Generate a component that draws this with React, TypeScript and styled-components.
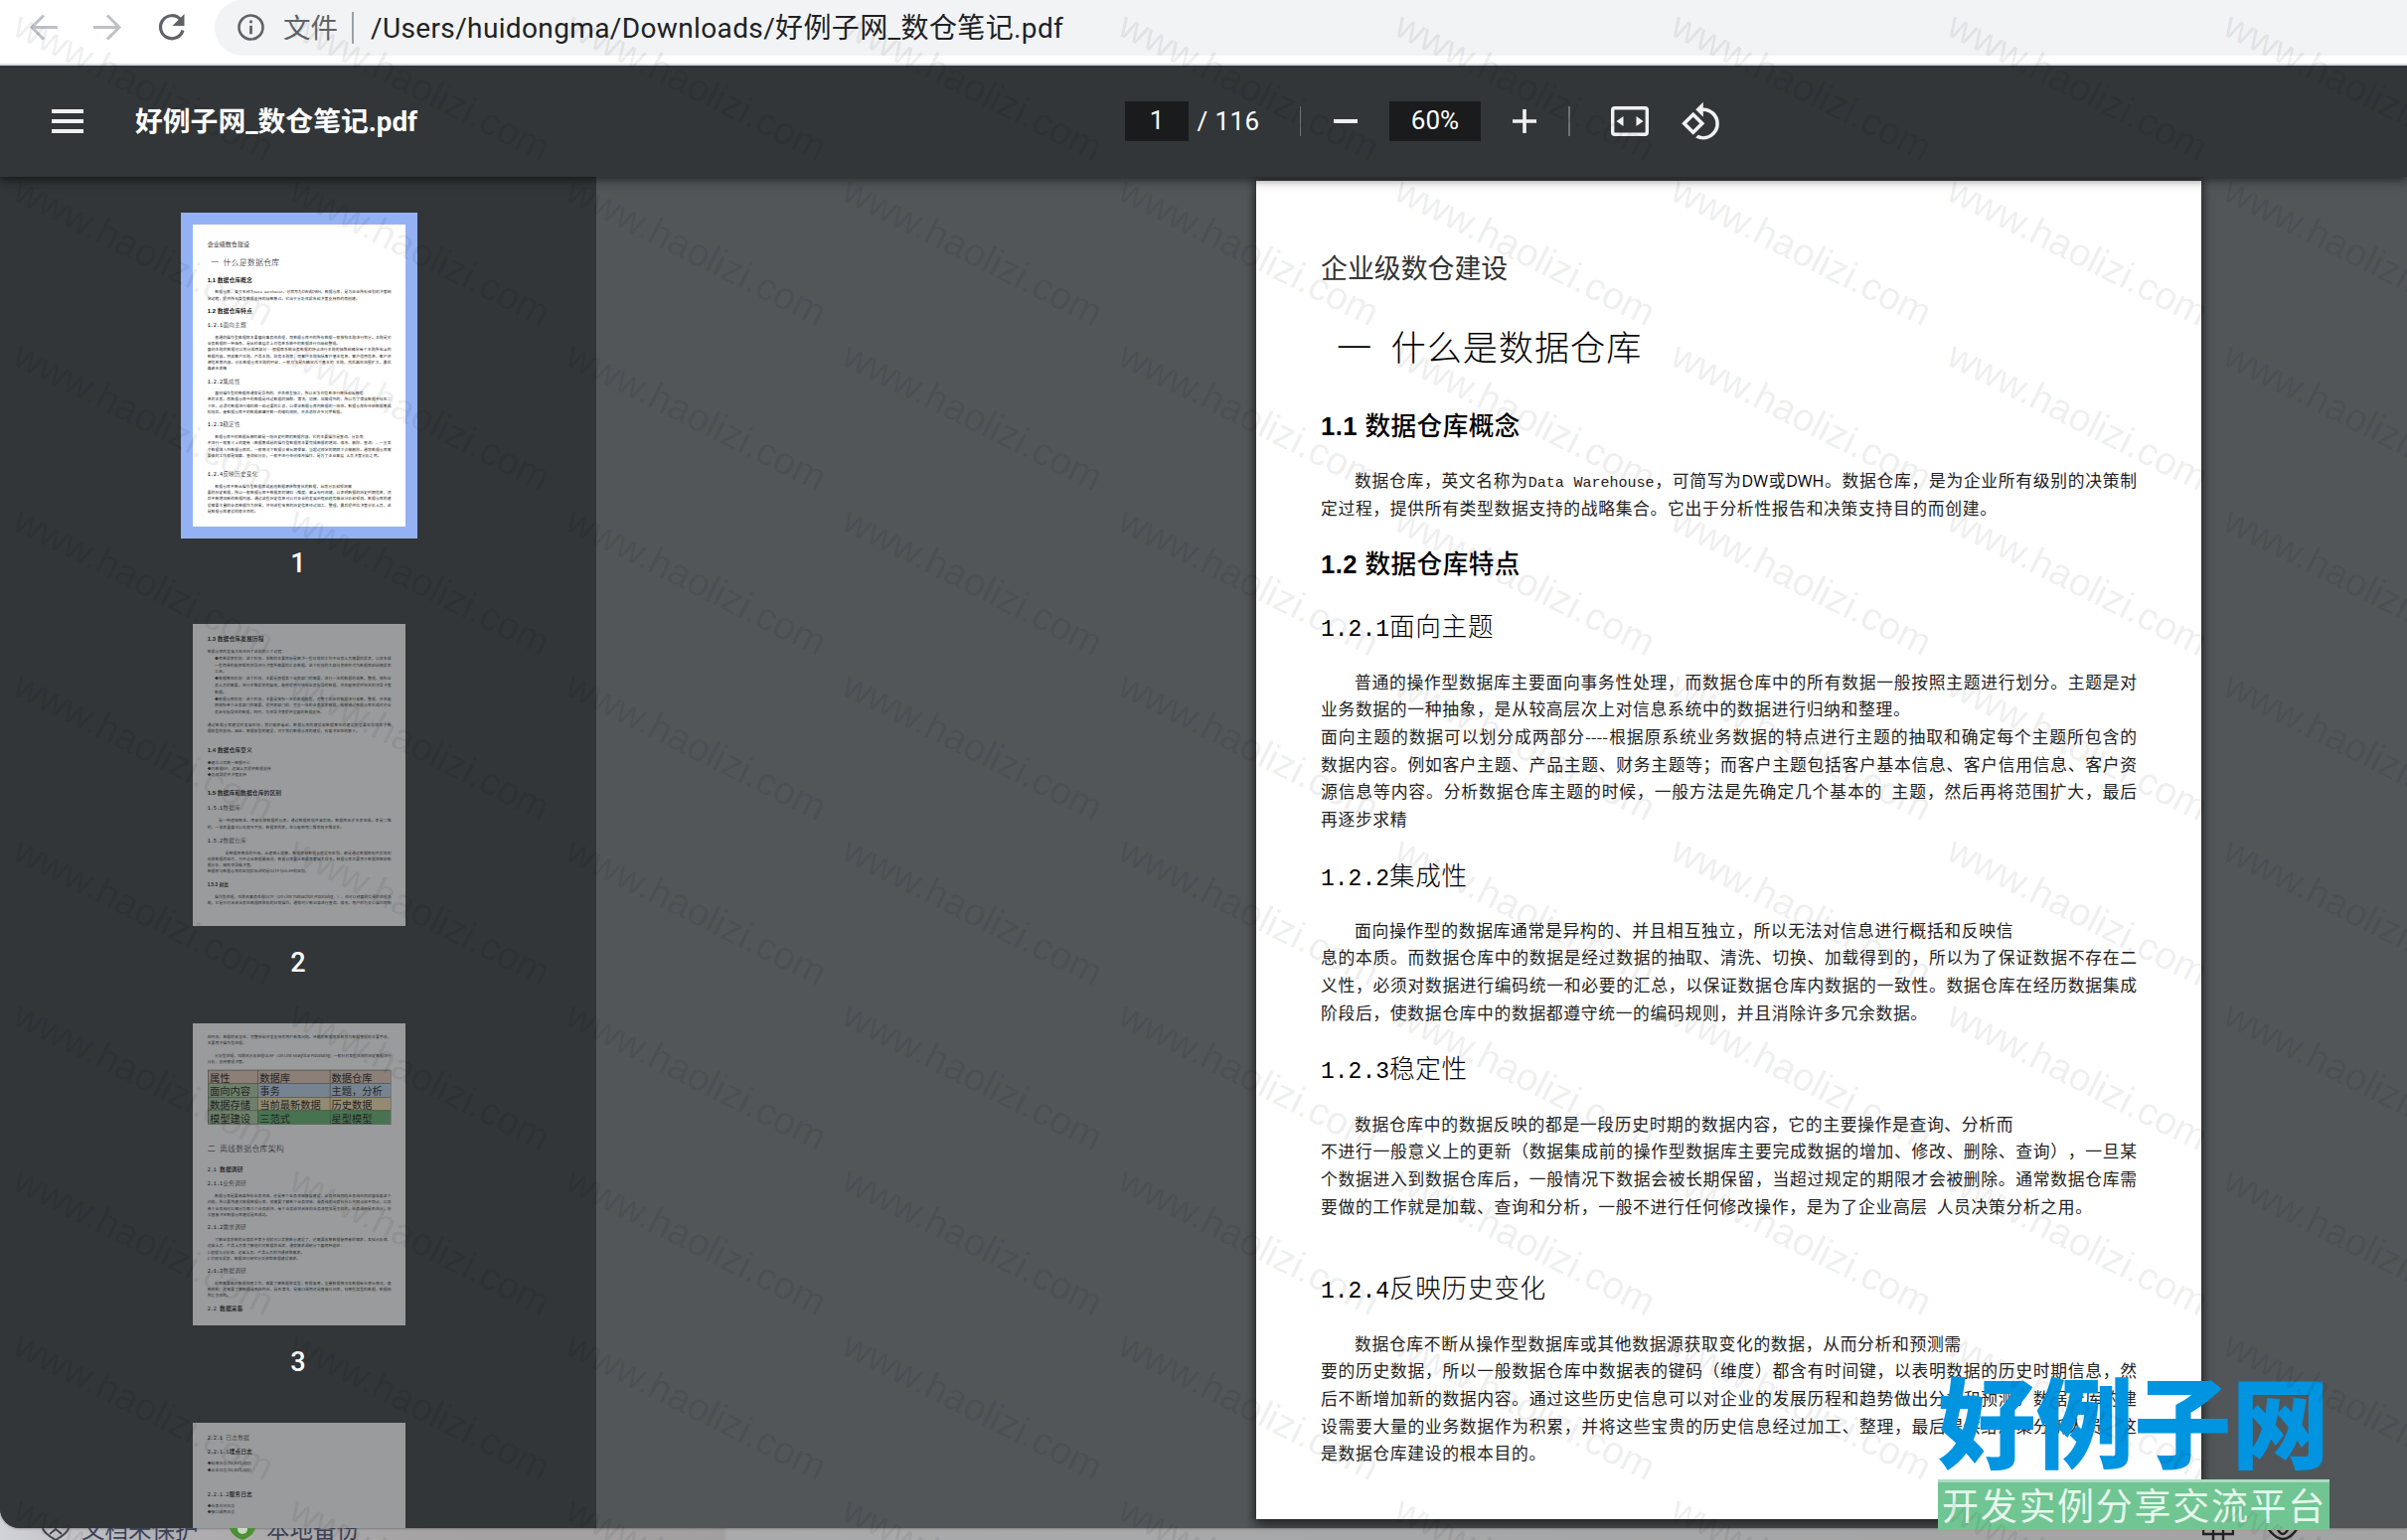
import React from 'react';
import styled, { createGlobalStyle } from 'styled-components';

const Global = createGlobalStyle`
  * { box-sizing: border-box; }
  html, body { margin: 0; padding: 0; background: #a5a5a6; overflow: hidden; }
  body { font-family: Roboto, "Noto Sans CJK SC", sans-serif; text-spacing-trim: space-all; }
`;

const Screen = styled.div`
  position: relative;
  width: 2422px;
  height: 1550px;
  overflow: hidden;
  display: flex;
  flex-direction: column;
  background: linear-gradient(90deg, #d2d3d8 0, #b0aeb0 160px, #a6a3a4 420px, #a19fa0 728px, #a9aaab 732px, #a3a3a4 100%);
`;

const BrowserWindow = styled.div`
  height: 1538px;
  flex: none;
  display: flex;
  flex-direction: column;
  overflow: hidden;
  border-radius: 0 0 0 20px;
  background: #323639;
  box-shadow: 0 0 3px rgba(0, 0, 0, 0.5);
`;

const AddressBar = styled.div`
  position: relative;
  z-index: 3;
  height: 66px;
  flex: none;
  display: flex;
  align-items: flex-start;
  background: #fff;
  border-bottom: 2px solid #dadce0;
`;

const NavButtons = styled.div`
  width: 216px;
  height: 56px;
  padding-left: 24px;
  display: flex;
  align-items: center;
  gap: 30px;
`;

const Omnibox = styled.div`
  flex: 1;
  height: 56px;
  padding: 0 0 1px 22px;
  display: flex;
  align-items: center;
  border-radius: 28px 0 0 28px;
  background: #f1f3f4;
  font-size: 28px;
  white-space: pre;
`;

const Scheme = styled.span`
  margin-left: 18px;
  padding-bottom: 3px;
  color: #5f6368;
  font-size: 27.5px;
`;

const OmniDivider = styled.span`
  width: 2px;
  height: 32px;
  margin: 0 17px 0 14px;
  background: #9aa0a6;
`;

const Path = styled.span`
  padding-bottom: 4px;
  color: #202124;
  letter-spacing: 0.37px;
`;

const PdfToolbar = styled.div`
  position: relative;
  z-index: 2;
  height: 112px;
  flex: none;
  display: flex;
  align-items: center;
  background: #323639;
  color: #fff;
  box-shadow: 0 -2px 16px rgba(0, 0, 0, 0.1), 0 2px 8px rgba(0, 0, 0, 0.4), 0 4px 12px rgba(0, 0, 0, 0.2);
`;

const ToolbarStart = styled.div`
  width: 1132px;
  padding-left: 44px;
  display: flex;
  align-items: center;
  gap: 44px;
`;

const FileName = styled.span`
  padding-bottom: 4px;
  font-size: 27.8px;
  font-weight: 700;
  white-space: pre;
`;

const ValueBox = styled.span<{ $w: number }>`
  width: ${p => p.$w}px;
  height: 40px;
  line-height: 39px;
  text-align: center;
  background: #1a1b1c;
  font-size: 26px;
`;

const PageTotal = styled.span`
  margin-left: 8.5px;
  width: 103px;
  font-size: 26px;
  line-height: 39px;
  letter-spacing: 0.4px;
  white-space: pre;
`;

const ToolDivider = styled.span`
  width: 1.5px;
  height: 30px;
  background: #6f7274;
`;

const IconSlot = styled.span<{ $w: number }>`
  width: ${p => p.$w}px;
  display: flex;
  justify-content: center;
  align-items: center;
`;

const Viewer = styled.div`
  flex: 1;
  min-height: 0;
  display: flex;
`;

const Sidebar = styled.div`
  width: 600px;
  flex: none;
  padding: 36px 0 0 2px;
  display: flex;
  flex-direction: column;
  align-items: center;
  overflow: hidden;
  background: #323639;
`;

const ThumbItem = styled.div`
  width: 598px;
  height: 402px;
  flex: none;
  display: flex;
  flex-direction: column;
  align-items: center;
  color: #fff;
`;

const ThumbFrame = styled.div<{ $active?: boolean }>`
  width: 238px;
  height: 328px;
  padding: 12px;
  background: ${p => (p.$active ? '#94b1f3' : 'transparent')};
`;

const ThumbClip = styled.div<{ $active?: boolean }>`
  width: 214px;
  height: 304px;
  overflow: hidden;
  background: #fff;
  opacity: ${p => (p.$active ? 1 : 0.5)};
`;

const ThumbScale = styled.div`
  width: 951px;
  height: 1347px;
  transform: scale(0.2252);
  transform-origin: 0 0;
`;

const ThumbNumber = styled.span`
  margin: 9px 2px 0 0;
  font-size: 27px;
  font-weight: 500;
  line-height: 32px;
`;

const Canvas = styled.div`
  flex: 1;
  padding: 4px 0 0 664px;
  background: #525659;
  overflow: hidden;
`;

const Sheet = styled.div`
  width: 951px;
  height: 1347px;
  padding-left: 65px;
  background: #fff;
  overflow: hidden;
`;

const MainSheet = styled.div`
  width: 951px;
  box-shadow: 0 0 7px 2px rgba(0, 0, 0, 0.4), 0 10px 12px rgba(0, 0, 0, 0.35);
`;

type Kind = 'title' | 'h1' | 'h2' | 'h2m' | 'h3' | 'h4' | 'p' | 'full';

const HEIGHT: Record<Kind, number> = { title: 40, h1: 50, h2: 36, h2m: 36, h3: 36, h4: 30, p: 26, full: 26 };

const TextLine = styled.div<{ $gap: number; $indent: number }>`
  margin-top: ${p => p.$gap}px;
  margin-left: ${p => p.$indent}px;
  white-space: pre;
`;

const DocTitle = styled(TextLine)`
  height: 40px;
  font: 400 26.9px/38px "Noto Sans CJK SC", sans-serif;
  color: #333;
`;

const Chapter = styled(TextLine)`
  height: 50px;
  font: 300 35.2px/57px "Liberation Mono", "Noto Sans CJK SC", sans-serif;
  letter-spacing: 0.9px;
  word-spacing: -3.5px;
  color: #000;
`;

const Section = styled(TextLine)`
  height: 36px;
  font: 500 25.6px/33px "Noto Sans CJK SC", sans-serif;
  letter-spacing: 0.45px;
  color: #000;
`;

const SubSection = styled(TextLine)`
  height: 36px;
  font: 300 25.6px/31px "Noto Sans CJK SC", sans-serif;
  letter-spacing: 0.7px;
  color: #000;
`;

const MinorSection = styled(TextLine)`
  height: 30px;
  font: 700 20px/30px "Liberation Sans", "Noto Sans CJK SC", sans-serif;
  letter-spacing: 0.5px;
  color: #000;
`;

const Numerals = styled.span`
  font-family: "Liberation Mono", monospace;
  font-size: 23px;
  letter-spacing: 0;
`;

const BoldNumerals = styled.span`
  font-family: "Liberation Sans", Arial, sans-serif;
  font-weight: 700;
`;

const Body = styled(TextLine)<{ $full?: boolean }>`
  width: ${p => (p.$full ? 821 - p.$indent + 'px' : 'auto')};
  height: 26px;
  font: 400 16.8px/24px "Noto Sans CJK SC", sans-serif;
  letter-spacing: ${p => (p.$full ? '0' : '0.67px')};
  white-space: ${p => (p.$full ? 'nowrap' : 'pre')};
  text-align-last: ${p => (p.$full ? 'justify' : 'left')};
  color: #222;
`;

const Serif = styled.span`
  font-family: "Liberation Mono", monospace;
  font-size: 15px;
  letter-spacing: 0;
`;

const Gothic = styled.span`
  font-family: "Open Sans", sans-serif;
  font-weight: 500;
  font-size: 16px;
  color: #000;
`;

type Row = [Kind, number, React.ReactNode, number?];

function splitNumber(text: React.ReactNode, Num: React.ElementType) {
  const m = typeof text === 'string' ? text.match(/^([\d.]+ ?)(.*)$/) : null;
  return m ? (<><Num>{m[1]}</Num>{m[2]}</>) : text;
}

/* Rows carry the vertical centre of each line; gaps between lines follow from it. */
function Rows({ rows, from = 0 }: { rows: Row[]; from?: number }) {
  let bottom = from;
  return (
    <>
      {rows.map(([kind, center, text, indent = 0], i) => {
        const top = center - HEIGHT[kind] / 2;
        const props = { $gap: Math.round((top - bottom) * 10) / 10, $indent: indent };
        bottom = top + HEIGHT[kind];
        switch (kind) {
          case 'title': return <DocTitle key={i} {...props}>{text}</DocTitle>;
          case 'h1': return <Chapter key={i} {...props}>{text}</Chapter>;
          case 'h2': return <Section key={i} {...props}>{splitNumber(text, BoldNumerals)}</Section>;
          case 'h2m': return <Section key={i} {...props}>{splitNumber(text, Numerals)}</Section>;
          case 'h3': return <SubSection key={i} {...props}>{splitNumber(text, Numerals)}</SubSection>;
          case 'h4': return <MinorSection key={i} {...props}>{text}</MinorSection>;
          default: return <Body key={i} {...props} $full={kind === 'full'}>{text}</Body>;
        }
      })}
    </>
  );
}

const page1: Row[] = [
  ['title', 88, '企业级数仓建设'],
  ['h1', 168.7, '一 什么是数据仓库', 16],
  ['h2', 246, '1.1 数据仓库概念'],
  ['full', 302.3, <>数据仓库，英文名称为<Serif>Data&nbsp;Warehouse</Serif>，可简写为<Gothic>DW</Gothic>或<Gothic>DWH</Gothic>。数据仓库，是为企业所有级别的决策制</>, 34],
  ['p', 329.6, '定过程，提供所有类型数据支持的战略集合。它出于分析性报告和决策支持目的而创建。'],
  ['h2', 384.7, '1.2 数据仓库特点'],
  ['h3', 449, '1.2.1面向主题'],
  ['full', 505.3, '普通的操作型数据库主要面向事务性处理，而数据仓库中的所有数据一般按照主题进行划分。主题是对', 34],
  ['p', 532.3, '业务数据的一种抽象，是从较高层次上对信息系统中的数据进行归纳和整理。'],
  ['full', 560, '面向主题的数据可以划分成两部分----根据原系统业务数据的特点进行主题的抽取和确定每个主题所包含的'],
  ['full', 588, '数据内容。例如客户主题、产品主题、财务主题等；而客户主题包括客户基本信息、客户信用信息、客户资'],
  ['full', 615.5, '源信息等内容。分析数据仓库主题的时候，一般方法是先确定几个基本的\u00a0\u00a0主题，然后再将范围扩大，最后'],
  ['p', 643.4, '再逐步求精'],
  ['h3', 699.7, '1.2.2集成性'],
  ['p', 754.7, '面向操作型的数据库通常是异构的、并且相互独立，所以无法对信息进行概括和反映信', 34],
  ['full', 782, '息的本质。而数据仓库中的数据是经过数据的抽取、清洗、切换、加载得到的，所以为了保证数据不存在二'],
  ['full', 810, '义性，必须对数据进行编码统一和必要的汇总，以保证数据仓库内数据的一致性。数据仓库在经历数据集成'],
  ['p', 838, '阶段后，使数据仓库中的数据都遵守统一的编码规则，并且消除许多冗余数据。'],
  ['h3', 894, '1.2.3稳定性'],
  ['p', 950, '数据仓库中的数据反映的都是一段历史时期的数据内容，它的主要操作是查询、分析而', 34],
  ['full', 977.5, '不进行一般意义上的更新（数据集成前的操作型数据库主要完成数据的增加、修改、删除、查询），一旦某'],
  ['full', 1005.3, '个数据进入到数据仓库后，一般情况下数据会被长期保留，当超过规定的期限才会被删除。通常数据仓库需'],
  ['p', 1033, '要做的工作就是加载、查询和分析，一般不进行任何修改操作，是为了企业高层\u00a0\u00a0人员决策分析之用。'],
  ['h3', 1114.7, '1.2.4反映历史变化'],
  ['p', 1171.3, '数据仓库不断从操作型数据库或其他数据源获取变化的数据，从而分析和预测需', 34],
  ['full', 1198.5, '要的历史数据，所以一般数据仓库中数据表的键码（维度）都含有时间键，以表明数据的历史时期信息，然'],
  ['full', 1226.3, '后不断增加新的数据内容。通过这些历史信息可以对企业的发展历程和趋势做出分析和预测。数据仓库的建'],
  ['full', 1254, '设需要大量的业务数据作为积累，并将这些宝贵的历史信息经过加工、整理，最后提供给决策分析人员，这'],
  ['p', 1281.3, '是数据仓库建设的根本目的。'],
];

const page2: Row[] = [
  ['h2', 66.6, '1.3 数据仓库发展历程'],
  ['p', 123, '数据仓库的发展大致经历了这样的三个过程：'],
  ['full', 154, '◆简单报表阶段：这个阶段，系统的主要目标是解决一些日常的工作中业务人员需要的报表，以及生成', 33],
  ['full', 183.5, '一些简单的能够帮助领导进行决策所需要的汇总数据。这个阶段的大部分表现形式为数据库和前端报表', 33],
  ['p', 211.6, '工具。', 33],
  ['full', 242.7, '◆数据集市阶段：这个阶段，主要是根据某个业务部门的需要，进行一定的数据的采集，整理，按照业', 33],
  ['full', 273.8, '务人员的需要，进行多维报表的展现，能够提供对特定业务指导的数据，并且能够提供特定的领导决策', 33],
  ['p', 305, '数据。', 33],
  ['full', 336, '◆数据仓库阶段：这个阶段，主要是按照一定的数据模型，对整个企业的数据进行采集，整理，并且能', 33],
  ['full', 362.6, '够按照各个业务部门的需要，提供跨部门的，完全一致的业务报表数据，能够通过数据仓库生成对对业', 33],
  ['p', 393.7, '务具有指导性的数据，同时，为领导决策提供全面的数据支持。', 33],
  ['full', 451.4, '通过数据仓库建设的发展阶段，我们能够看出，数据仓库的建设和数据集市的建设的重要区别就在于数'],
  ['p', 478, '据模型的支持。因此，数据模型的建设，对于我们数据仓库的建设，有着决定性的意义。'],
  ['h2', 565, '1.4 数据仓库意义'],
  ['p', 620, '◆建立公司统一数据中心'],
  ['p', 647, '◆为数据BP、运营人员提供数据支持'],
  ['p', 673, '◆为领导提供决策支持'],
  ['h2', 755, '1.5 数据库和数据仓库的区别'],
  ['h3', 821, '1.5.1数据库'],
  ['full', 877.6, '是一种逻辑概念，用来存放数据的仓库。通过数据库软件来实现。数据库由许多表组成，表是二维', 50],
  ['p', 908.7, '的，一张表里面可以有很多字段，数据库的表，在与能够用二维表现多维关系。'],
  ['h3', 968, '1.5.2数据仓库'],
  ['full', 1024, '是数据库概念的升级。从逻辑上理解，数据库和数据仓库没有区别，都是通过数据库软件实现的', 80],
  ['full', 1051, '存放数据的地方，只不过从数据量来说，数据仓库要比数据库更庞大得多。数据仓库主要用于数据挖掘和数'],
  ['p', 1077, '据分析，辅助领导做决策。'],
  ['p', 1104, '数据库与数据仓库的区别实际讲的是OLTP与OLAP的区别。'],
  ['h4', 1165, '1.5.3 对比'],
  ['full', 1219.5, '操作型处理，叫联机事务处理OLTP（On-Line Transaction Processing，），也可以称面向交易的处理系', 33],
  ['full', 1246, '统，它是针对具体业务在数据库联机的日常操作，通常对少数记录进行查询、修改。用户较为关心操作的响'],
];

const page3Top: Row[] = [
  ['full', 60.7, '应时间、数据的安全性、完整性和并发支持的用户数等问题。传统的数据库系统作为数据管理的主要手段，'],
  ['p', 87.3, '主要用于操作型处理。'],
  ['full', 146.5, '分析型处理，叫联机分析处理OLAP（On-Line Analytical Processing）一般针对某些主题的历史数据进行', 33],
  ['p', 173, '分析，支持管理决策。'],
];

const page3Bottom: Row[] = [
  ['h1', 561, '二 离线数据仓库架构'],
  ['h2m', 653, '2.1 数据调研'],
  ['h3', 715, '2.1.1业务调研'],
  ['full', 770, '数据仓库是要涵盖所有业务领域，还是各个业务领域独自建设，业务领域内的业务线也同样面临着这个', 33],
  ['full', 798, '问题，所以要构建大数据数据仓库，就需要了解各个业务领域、业务线的业务有什么共同点和不同点，以及'],
  ['full', 827, '各个业务线可以细分为哪几个业务模块，每个业务模块具体的业务流程又是怎样的。业务调研是否充分，将'],
  ['p', 855, '会直接决定数据仓库建设是否成功。'],
  ['h3', 910, '2.1.2需求调研'],
  ['full', 966, '了解业务系统的业务后不等于说就可以实施数仓建设了，还需要收集数据使用者的需求，及找分析师、', 33],
  ['p', 993, '运营人员、产品人员等了解他们对数据的诉求，通常需求调研分下面两种途径：'],
  ['p', 1023, '1.根据与分析师、运营人员、产品人员的沟通获取需求。'],
  ['p', 1051, '2.对现有报表、数据进行研究分析获取数据建设需求。'],
  ['h3', 1106, '2.1.3数据调研'],
  ['full', 1162, '前期需要做好数据探查工作，需要了解数据库类型，数据来源，全量数据情况及数据每年增长情况，更', 33],
  ['full', 1188, '新机制；还需要了解数据是否结构化，是否清洗，是接口调用还是直接访问库，有哪些类型的数据，数据结'],
  ['p', 1215, '构之怎样的。'],
  ['h2m', 1274, '2.2 数据采集'],
];

const page4: Row[] = [
  ['h3', 66.6, '2.2.1 日志数据'],
  ['h2m', 129, '2.2.1.1埋点日志'],
  ['p', 180.6, '◆前端日志(h5,web,app)'],
  ['p', 211.6, '◆点击日志(h5,web,app)'],
  ['h2m', 316.7, '2.2.1.2服务日志'],
  ['p', 371.5, '◆业务访问日志'],
  ['p', 398, '◆接口调用日志'],
];

const Table = styled.div`
  width: 817px;
  margin: 22px 0 0 3px;
  display: grid;
  grid-template-columns: 223px 321px 271px;
  grid-auto-rows: 60.5px;
  border: 2px solid #222;
  border-width: 0 2px 2px 0;
`;

const Cell = styled.div<{ $bg: string }>`
  padding-left: 6px;
  border-left: 2px solid #222;
  border-top: 2px solid #222;
  background: ${p => p.$bg};
  font: 400 45.5px/62px "Noto Sans CJK SC", sans-serif;
  color: #111;
  white-space: pre;
`;

const cells: [string, string][] = [
  ['属性', '#e4c8b6'], ['数据库', '#e4c8b6'], ['数据仓库', '#e4c8b6'],
  ['面向内容', '#acc99b'], ['事务', '#bccfe6'], ['主题，分析', '#bccfe6'],
  ['数据存储', '#acc99b'], ['当前最新数据', '#f3e0a8'], ['历史数据', '#f3e0a8'],
  ['模型建设', '#acc99b'], ['三范式', '#5fb168'], ['星型模型', '#5fb168'],
];

const FirstPage = () => <Sheet><Rows rows={page1} /></Sheet>;
const SecondPage = () => <Sheet><Rows rows={page2} /></Sheet>;
const ThirdPage = () => (
  <Sheet>
    <Rows rows={page3Top} />
    <Table>{cells.map(([t, c]) => <Cell key={t} $bg={c}>{t}</Cell>)}</Table>
    <Rows rows={page3Bottom} from={452} />
  </Sheet>
);
const FourthPage = () => <Sheet><Rows rows={page4} /></Sheet>;

function Thumb({ n, active, children }: { n: number; active?: boolean; children: React.ReactNode }) {
  return (
    <ThumbItem>
      <ThumbFrame $active={active}>
        <ThumbClip $active={active}><ThumbScale>{children}</ThumbScale></ThumbClip>
      </ThumbFrame>
      {n < 4 && <ThumbNumber>{n}</ThumbNumber>}
    </ThumbItem>
  );
}

const BottomStrip = styled.div`
  height: 12px;
  flex: none;
  display: flex;
  align-items: flex-start;
  overflow: hidden;
  padding-left: 42px;
  color: #3a4258;
  font: 400 23.5px/30px "Noto Sans CJK SC", sans-serif;
`;

const StripLabel = styled.span<{ $ml: number; $w: number }>`
  width: ${p => p.$w}px;
  margin: -15px 0 0 ${p => p.$ml}px;
  white-space: pre;
`;

const StripIcon = styled.svg<{ $ml: number }>`
  flex: none;
  margin-left: ${p => p.$ml}px;
`;

const Watermarks = styled.div`
  position: absolute;
  inset: 0;
  z-index: 10;
  display: grid;
  grid-template-columns: repeat(9, 278px);
  grid-auto-rows: 166px;
  padding: 17px 0 0 14px;
  overflow: hidden;
  pointer-events: none;
`;

const Mark = styled.span`
  transform: translate(12.5px, -14px) rotate(26.7deg);
  transform-origin: 0 0;
  font: 400 38.8px/44px "Liberation Sans", Arial, sans-serif;
  color: rgba(0, 0, 0, 0.08);
  white-space: pre;
`;

const SiteBadge = styled.div`
  position: absolute;
  z-index: 5;
  left: 1950px;
  top: 1374px;
  width: 394px;
`;

const SiteName = styled.div`
  height: 115px;
  font: 900 98.5px/107px "Noto Sans CJK SC", sans-serif;
  color: #0094e1;
  white-space: pre;
`;

const SiteSlogan = styled.div`
  height: 51px;
  padding-left: 4px;
  background: #70c592;
  border-top: 3px solid #a9dcbf;
  font: 400 37px/44px "Noto Sans CJK SC", sans-serif;
  letter-spacing: 1.7px;
  color: #e6f6ec;
  white-space: pre;
`;

export default function App() {
  return (
    <Screen>
      <Global />
      <BrowserWindow>
        <AddressBar>
          <NavButtons>
            <svg width="36" height="36" viewBox="0 0 36 36" fill="none" stroke="#bdc1c6" strokeWidth="3"><path d="M34 17.500H9M20 5.500 8 17.500l12 12" /></svg>
            <svg width="36" height="36" viewBox="0 0 36 36" fill="none" stroke="#bdc1c6" strokeWidth="3"><path d="M4 17.500h25M18 5.500l12 12-12 12" /></svg>
            <svg width="36" height="36" viewBox="0 0 36 36"><path d="M25.500 9.500A11.500 11.500 0 1 0 28 20.500" fill="none" stroke="#5f6368" strokeWidth="3.2" /><path d="M29.500 4v12H17.500z" fill="#5f6368" /></svg>
          </NavButtons>
          <Omnibox>
            <svg width="29" height="29" viewBox="0 0 29 29"><circle cx="14.5" cy="14.5" r="12" fill="none" stroke="#5f6368" strokeWidth="2.6" /><path d="M13.1 7.5h2.8v2.8h-2.8zM13.1 12.7h2.8v8.6h-2.8z" fill="#5f6368" /></svg>
            <Scheme>文件</Scheme>
            <OmniDivider />
            <Path>/Users/huidongma/Downloads/好例子网_数仓笔记.pdf</Path>
          </Omnibox>
        </AddressBar>
        <PdfToolbar>
          <ToolbarStart>
            <svg width="48" height="48" viewBox="0 0 48 48" fill="#f1f1f1"><path d="M8 12h32v4H8zM8 22h32v4H8zM8 32h32v4H8z" /></svg>
            <FileName>好例子网_数仓笔记.pdf</FileName>
          </ToolbarStart>
          <ValueBox $w={64}>1</ValueBox>
          <PageTotal>/ 116</PageTotal>
          <ToolDivider />
          <IconSlot $w={89}><svg width="24" height="24"><path d="M0 10h24v4H0z" fill="#f1f1f1" /></svg></IconSlot>
          <ValueBox $w={92}>60%</ValueBox>
          <IconSlot $w={88}><svg width="24" height="24"><path d="M0 10.2h10.2V0h3.6v10.2H24v3.6H13.8V24h-3.6V13.8H0z" fill="#f1f1f1" /></svg></IconSlot>
          <ToolDivider />
          <IconSlot $w={120}>
            <svg width="38" height="30" viewBox="0 0 38 30"><rect x="1.7" y="1.7" width="34.6" height="26.6" rx="2" fill="none" stroke="#f1f1f1" strokeWidth="3.4" /><path d="M12.5 10v10L5.5 15zM25.500 10v10l7-5z" fill="#f1f1f1" /></svg>
          </IconSlot>
          <IconSlot $w={24}>
            <svg width="41" height="41" viewBox="0.200 0.400 23 23" fill="#f1f1f1" style={{ flex: 'none' }}><path d="M7.34 6.41L.86 12.9l6.49 6.48 6.49-6.48-6.5-6.49zM3.69 12.9l3.66-3.66L11 12.9l-3.66 3.66-3.65-3.66zm15.67-6.26A8.95 8.95 0 0 0 13 4V.76L8.76 5 13 9.24V6c1.79 0 3.58.68 4.95 2.05a7.007 7.007 0 0 1 0 9.9 6.973 6.973 0 0 1-7.79 1.44l-1.49 1.49C10.02 21.62 11.51 22 13 22c2.3 0 4.61-.88 6.36-2.64a8.98 8.98 0 0 0 0-12.72z" /></svg>
          </IconSlot>
        </PdfToolbar>
        <Viewer>
          <Sidebar>
            <Thumb n={1} active><FirstPage /></Thumb>
            <Thumb n={2}><SecondPage /></Thumb>
            <Thumb n={3}><ThirdPage /></Thumb>
            <Thumb n={4}><FourthPage /></Thumb>
          </Sidebar>
          <Canvas>
            <MainSheet><FirstPage /></MainSheet>
          </Canvas>
        </Viewer>
      </BrowserWindow>
      <BottomStrip>
        <StripIcon $ml={0} width="28" height="12" viewBox="0 0 28 12" fill="none" stroke="#45474d" strokeWidth="2"><path d="M1 0q1 5 13 12Q26 5 27 0M8 6l6-5 6 5" /></StripIcon>
        <StripLabel $ml={12} $w={118}>文档未保护</StripLabel>
        <StripIcon $ml={31} width="26" height="12" viewBox="0 0 26 12"><path d="M0 0h26q-2 8-13 12Q2 8 0 0z" fill="#4c8f35" /><circle cx="13" cy="1" r="5" fill="#c9d8c4" /></StripIcon>
        <StripLabel $ml={11} $w={96}>本地备份</StripLabel>
        <StripIcon $ml={1852} width="32" height="12" viewBox="0 0 32 12" fill="none" stroke="#222" strokeWidth="2.4"><path d="M1 0v6h30V0M11 0v12M21 0v12" /></StripIcon>
        <StripIcon $ml={33} width="32" height="12" viewBox="0 0 32 12" fill="none" stroke="#222" strokeWidth="2.4"><path d="M1 0q15 22 30 0M10 0q6 12 12 0" /></StripIcon>
      </BottomStrip>
      <SiteBadge>
        <SiteName>好例子网</SiteName>
        <SiteSlogan>开发实例分享交流平台</SiteSlogan>
      </SiteBadge>
      <Watermarks>
        {Array.from({ length: 90 }, (_, i) => <Mark key={i}>www.haolizi.com</Mark>)}
      </Watermarks>
    </Screen>
  );
}
